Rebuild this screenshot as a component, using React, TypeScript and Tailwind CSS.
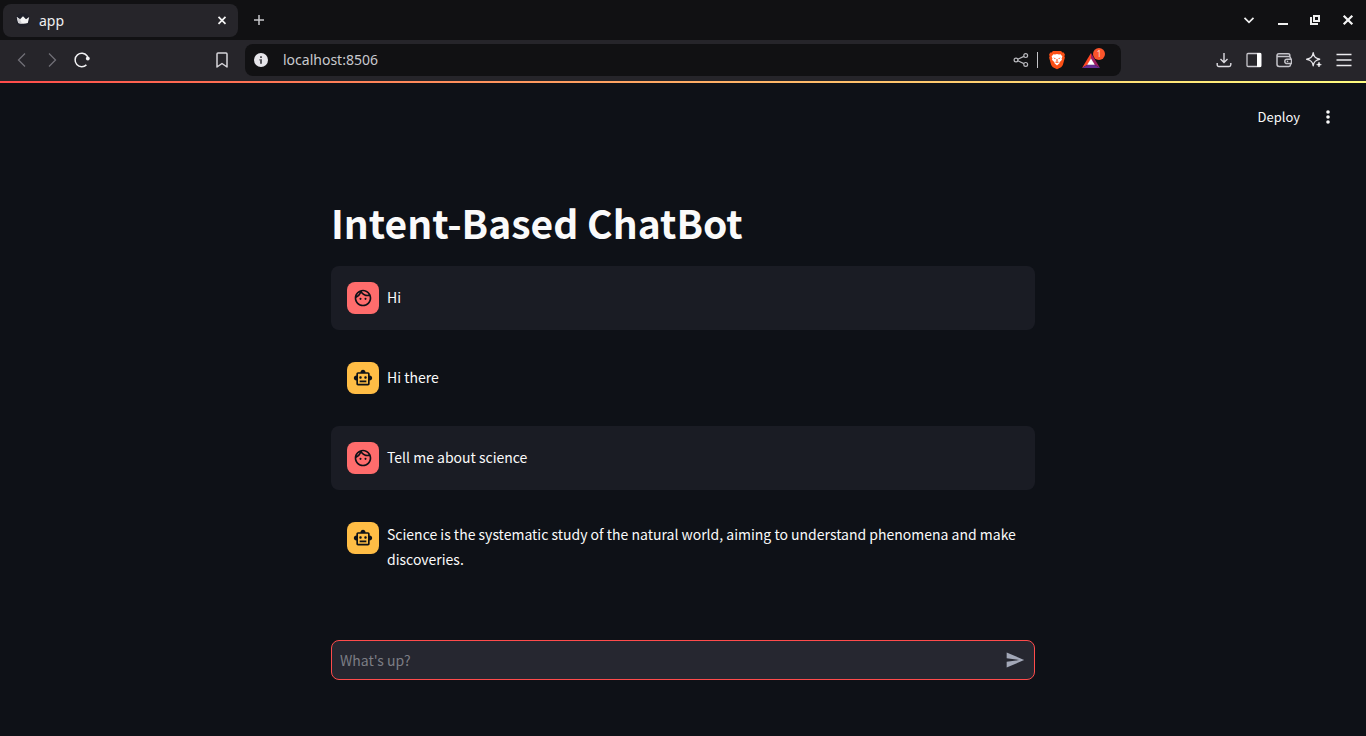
import type { ReactNode } from "react";
import { MdOutlineFace, MdOutlineSmartToy, MdSend } from "react-icons/md";

type Role = "user" | "assistant";

const messages: { role: Role; text: string }[] = [
  { role: "user", text: "Hi" },
  { role: "assistant", text: "Hi there" },
  { role: "user", text: "Tell me about science" },
  {
    role: "assistant",
    text: "Science is the systematic study of the natural world, aiming to understand phenomena and make discoveries.",
  },
];

function IconButton({ label, children }: { label: string; children: ReactNode }) {
  return (
    <button type="button" aria-label={label} className="flex size-[30px] shrink-0 items-center justify-center">
      {children}
    </button>
  );
}

function TabStrip() {
  return (
    <div className="flex h-10 items-center bg-[#111113]">
      <div className="ml-[3px] flex h-[33px] w-[235px] items-center rounded-lg bg-[#26252a] pr-2 pl-3">
        <svg viewBox="0 0 16 16" className="size-4" aria-hidden="true">
          <circle cx="8" cy="8" r="7" fill="#1f2029" />
          <path d="M1.800 5 5 7.200 8 4.200l3 3L14.200 5 12.800 11C10 12 6 12 3.200 11Z" fill="#f4f4f4" />
          <path d="M1.800 5 5 7.200 7 11.700C5.500 11.600 4.300 11.400 3.200 11Z" fill="#cfcfd2" />
        </svg>
        <span className="ml-2 flex-1 pt-px text-sm text-[#f0f0f2]">app</span>
        <button type="button" aria-label="Close tab" className="flex size-4 items-center justify-center">
          <svg viewBox="0 0 16 16" className="size-4" fill="none" stroke="#f5f5f5" strokeWidth="1.700">
            <path d="m4.500 4.800 7 7m0-7-7 7" />
          </svg>
        </button>
      </div>
      <button type="button" aria-label="New tab" className="ml-[13px] flex size-4 items-center justify-center">
        <svg viewBox="0 0 16 16" className="size-4" fill="none" stroke="#c8c8cb" strokeWidth="1.500">
          <path d="M8 3v10M3 8h10" />
        </svg>
      </button>
      <div className="ml-auto flex items-center gap-[17px] pr-[10px]">
        <button type="button" aria-label="Search tabs">
          <svg viewBox="0 0 16 16" className="block size-4" fill="none" stroke="#f0f0f0" strokeWidth="1.700">
            <path d="m3.500 5.800 4.500 4.500 4.500-4.500" />
          </svg>
        </button>
        <button type="button" aria-label="Minimize">
          <svg viewBox="0 0 16 16" className="block size-4" fill="#f0f0f0">
            <path d="M4 11h10v2H4z" />
          </svg>
        </button>
        <button type="button" aria-label="Restore">
          <svg viewBox="0 0 16 16" className="block size-4" fill="none" stroke="#f0f0f0" strokeWidth="2">
            <path d="M7 4h5v5H7zM4 5v7h7" />
          </svg>
        </button>
        <button type="button" aria-label="Close window">
          <svg viewBox="0 0 16 16" className="block size-4" fill="none" stroke="#f5f5f5" strokeWidth="2.200">
            <path d="m3.700 3.700 8.600 8.600m0-8.600-8.600 8.600" />
          </svg>
        </button>
      </div>
    </div>
  );
}

function AddressBar() {
  return (
    <div className="flex h-8 items-center rounded-lg bg-[#111113] pr-[21px] pl-2">
      <svg viewBox="0 0 16 16" className="size-4" aria-hidden="true">
        <circle cx="8" cy="8" r="7" fill="#e6e5ea" />
        <path d="M7 4.300h2v1.800H7zM6.300 7.200H9v4.500H7V8.500h-.7z" fill="#55545a" />
      </svg>
      <input
        aria-label="Address"
        defaultValue="localhost:8506"
        className="ml-[14px] min-w-0 flex-1 bg-transparent text-sm text-[#c9c9ce] outline-none"
      />
      <button type="button" aria-label="Share">
        <svg viewBox="0 0 16 16" className="block size-4" fill="none" stroke="#b9b9be" strokeWidth="1.200">
          <circle cx="3" cy="8" r="1.900" />
          <circle cx="12.700" cy="3.600" r="1.900" />
          <circle cx="12.700" cy="12.400" r="1.900" />
          <path d="m4.800 7.200 6.100-2.800M4.800 8.800l6.100 2.800" />
        </svg>
      </button>
      <span className="ml-2 h-4 w-px bg-[#c4c4c8]" />
      <button type="button" aria-label="Shields" className="ml-[9px]">
        <svg viewBox="0 0 20 20" className="block size-5">
          <path
            d="M6 1h8l1.500 1.500 1.200-.1 1.200 2-.5 2 .5 1.200-2 7.200c-.3 1-1 1.800-1.800 2.400L10 19.300l-4.100-2.100C5.100 16.600 4.400 15.800 4.100 14.800L2.100 7.600l.5-1.200-.5-2 1.200-2 1.200.1z"
            fill="#fb5016"
          />
          <path
            d="M6.400 4.200 8 4.600 10 4.100 12 4.600 13.600 4.200 15.400 6.500 14.600 8.600 15 9.800 12.600 12.300 12.500 13.200 10 15.600 7.500 13.200 7.400 12.300 5 9.800 5.400 8.600 4.600 6.500z"
            fill="#fff"
          />
          <path
            d="M6.300 7.600 8.700 8.200 8 9.300zM13.700 7.600l-2.400.6.7 1.100zM9.500 9h1L10.600 11l-.6.600-.6-.6zM7.600 12l2.400-.6 2.400.6-2.400 1z"
            fill="#fb5016"
          />
        </svg>
      </button>
      <button type="button" aria-label="Rewards, 1 notification" className="relative ml-[15px]">
        <svg viewBox="0 0 18 18" className="block size-[18px]">
          <path d="M9 2 0 17l6.200-3.700L9 8z" fill="#ff4724" />
          <path d="m9 2 9 15-6.200-3.700L9 8z" fill="#9e1f63" />
          <path d="m0 17 6.200-3.700h5.600L18 17z" fill="#662d91" />
          <path d="m9 7.500 3.800 6.300H5.200z" fill="#fff" />
        </svg>
        <span className="absolute -top-[3px] left-[11px] flex size-3 items-center justify-center rounded-full bg-[#fb542b] text-[9px] leading-3 text-[#ffd5c9]">
          1
        </span>
      </button>
    </div>
  );
}

function Toolbar() {
  return (
    <div className="grid h-[41px] grid-cols-[245px_1fr_245px] items-center bg-[#26252a] pb-px">
      <div className="flex items-center pr-2 pl-[7px]">
        <IconButton label="Back">
          <svg viewBox="0 0 16 16" className="size-4" fill="none" stroke="#706f76" strokeWidth="1.300">
            <path d="M11 1.500 4.500 8l6.500 6.500" />
          </svg>
        </IconButton>
        <IconButton label="Forward">
          <svg viewBox="0 0 16 16" className="size-4" fill="none" stroke="#706f76" strokeWidth="1.300">
            <path d="M5 1.500 11.500 8 5 14.500" />
          </svg>
        </IconButton>
        <IconButton label="Reload">
          <svg viewBox="0 0 16 16" className="size-4" fill="none" stroke="#f2f2f4" strokeWidth="1.500">
            <path d="M12.400 12.900A6.700 6.700 0 1 1 13 3.800L14 6" />
            <circle cx="13.800" cy="6.500" r="1.900" fill="#f2f2f4" stroke="none" />
          </svg>
        </IconButton>
        <div className="ml-auto">
          <IconButton label="Bookmark this page">
            <svg viewBox="0 0 16 16" className="size-4" fill="none" stroke="#d6d5da" strokeWidth="1.500" strokeLinejoin="round">
              <path d="M3 2a1 1 0 0 1 1-1h8a1 1 0 0 1 1 1v13l-5-3.500L3 15z" />
            </svg>
          </IconButton>
        </div>
      </div>
      <AddressBar />
      <div className="flex items-center justify-end pr-[7px]">
        <IconButton label="Downloads">
          <svg viewBox="0 0 16 16" className="size-4" fill="none" stroke="#dddce1" strokeWidth="1.400">
            <path d="M8 1v9.500M4.500 7 8 10.500 11.500 7M1.200 11v1.800A1.700 1.700 0 0 0 2.900 14.500h10.200a1.700 1.700 0 0 0 1.700-1.700V11" />
          </svg>
        </IconButton>
        <IconButton label="Sidebar">
          <svg viewBox="0 0 16 16" className="size-4" fill="none" stroke="#c9c8ce">
            <rect x="1" y="1.500" width="14" height="13" rx="1" strokeWidth="1.300" />
            <path d="M11 1h4v14h-4z" fill="#fff" stroke="none" />
          </svg>
        </IconButton>
        <IconButton label="Wallet">
          <svg viewBox="0 0 16 16" className="size-4" fill="none" stroke="#c4c3c9" strokeWidth="1.500">
            <path d="M1 3.500v8.800A2.200 2.200 0 0 0 3.200 14.500h9.600a1.700 1.700 0 0 0 1.700-1.700V11.600M14.500 7.200V6.200A1.700 1.700 0 0 0 12.800 4.500H2.500A1.500 1.500 0 0 1 1 3.200 1.800 1.800 0 0 1 2.800 1.700h9.500A1.500 1.500 0 0 1 13.800 3.200V4.500" />
            <path d="M15.500 7.200H11a2.200 2.200 0 0 0 0 4.400h4.500z" />
            <path d="M10.800 9.400h1.400" />
          </svg>
        </IconButton>
        <IconButton label="Assistant">
          <svg viewBox="0 0 16 16" className="size-4" fill="none" stroke="#e6e5ea" strokeWidth="1.400" strokeLinejoin="round">
            <path d="M7.200.800C7.900 4.800 9.300 6.400 13.700 7.200 9.300 8.100 7.900 9.600 7.200 13.700 6.500 9.600 5.100 8.100.700 7.200 5.100 6.400 6.500 4.800 7.200.800z" />
            <path d="M13 10.200c.3 1.500.8 2 2.300 2.400-1.500.4-2 .9-2.300 2.400-.3-1.500-.8-2-2.300-2.400 1.500-.4 2-.9 2.300-2.400z" fill="#fff" strokeWidth=".8" />
          </svg>
        </IconButton>
        <IconButton label="Menu">
          <svg viewBox="0 0 16 16" className="size-4" fill="none" stroke="#ecebef" strokeWidth="1.400">
            <path d="M.5 2.500h15M.5 8h15M.5 13.500h15" />
          </svg>
        </IconButton>
      </div>
    </div>
  );
}

function Message({ role, text }: { role: Role; text: string }) {
  const isUser = role === "user";
  return (
    <li className={isUser ? "flex items-start gap-2 rounded-lg bg-[#1a1c24] py-4 pl-4" : "flex items-start gap-2 rounded-lg py-4 pl-4"}>
      <span
        className={
          isUser
            ? "flex size-8 shrink-0 items-center justify-center rounded-lg bg-[#ff6c6c] text-[#0e1117]"
            : "flex size-8 shrink-0 items-center justify-center rounded-lg bg-[#ffbd45] text-[#0e1117]"
        }
      >
        {isUser ? <MdOutlineFace className="size-5" /> : <MdOutlineSmartToy className="size-5" />}
      </span>
      <p className="mb-px self-center text-sm leading-[25px]">{text}</p>
    </li>
  );
}

export default function App() {
  return (
    <div className="flex min-h-screen flex-col bg-[#0e1117] font-['Noto_Sans',sans-serif] text-[#fafafa]">
      <TabStrip />
      <Toolbar />
      <div className="h-0.5 bg-linear-to-r from-[#ff4b4b] to-[#fffd80]" />
      <div className="flex flex-1 flex-col font-['Noto_Sans_CJK_JP',sans-serif]">
        <header className="flex items-center justify-end gap-[18px] pt-[22px] pr-7">
          <button type="button" className="text-[13px] leading-6">
            Deploy
          </button>
          <button type="button" aria-label="Main menu">
            <svg viewBox="0 0 20 20" className="block size-5" fill="currentColor">
              <circle cx="10" cy="5" r="1.800" />
              <circle cx="10" cy="10" r="1.800" />
              <circle cx="10" cy="15" r="1.800" />
            </svg>
          </button>
        </header>
        <main className="mx-auto flex w-full max-w-[704px] flex-1 flex-col">
          <h1 className="mt-[67px] text-[39px] leading-[52px] font-bold">Intent-Based ChatBot</h1>
          <ul className="mt-[18px] flex flex-col gap-4">
            {messages.map((m) => (
              <Message key={m.text} role={m.role} text={m.text} />
            ))}
          </ul>
          <form
            className="mt-auto mb-14 flex h-10 items-center rounded-lg border border-[#ff4b4b] bg-[#262730] pr-[9px] pl-2"
            onSubmit={(e) => e.preventDefault()}
          >
            <input
              aria-label="Message"
              placeholder="What's up?"
              className="min-w-0 flex-1 bg-transparent text-sm leading-6 outline-none placeholder:text-[#7c7d84]"
            />
            <button type="submit" aria-label="Send" className="text-[#a3a8b8]">
              <MdSend className="size-5" />
            </button>
          </form>
        </main>
      </div>
    </div>
  );
}
